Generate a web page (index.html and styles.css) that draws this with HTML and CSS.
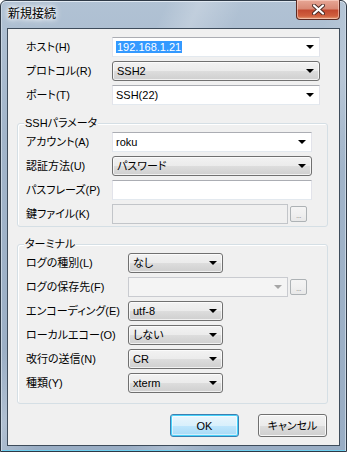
FILE: index.html
```html
<!DOCTYPE html>
<html lang="ja">
<head>
<meta charset="utf-8">
<title>新規接続</title>
<link rel="stylesheet" href="styles.css">
</head>
<body>
<div class="window">
  <div class="titlebar">
    <span class="title">新規接続</span>
    <div class="close">
      <svg width="13" height="11" viewBox="0 0 13 11">
        <path d="M2 1.5 L11 9.5 M11 1.5 L2 9.5" stroke="#4a2a24" stroke-width="4" stroke-linecap="round"/>
        <path d="M2 1.5 L11 9.5 M11 1.5 L2 9.5" stroke="#ffffff" stroke-width="2.2" stroke-linecap="round"/>
      </svg>
    </div>
  </div>
  <div class="client">
    <div class="section">
      <div class="row">
        <span class="label">ホスト(H)</span>
        <div class="combo edit w208"><span class="val"><span class="sel">192.168.1.21</span></span><span class="arrow"></span></div>
      </div>
      <div class="row">
        <span class="label">プロトコル(R)</span>
        <div class="combo list w208"><span class="val">SSH2</span><span class="arrow"></span></div>
      </div>
      <div class="row">
        <span class="label">ポート(T)</span>
        <div class="combo edit w208"><span class="val">SSH(22)</span><span class="arrow"></span></div>
      </div>
    </div>

    <div class="group g1">
      <span class="legend">SSHパラメータ</span>
      <div class="row">
        <span class="label">アカウント(A)</span>
        <div class="combo edit w200"><span class="val">roku</span><span class="arrow"></span></div>
      </div>
      <div class="row">
        <span class="label">認証方法(U)</span>
        <div class="combo list w200"><span class="val">パスワード</span><span class="arrow"></span></div>
      </div>
      <div class="row">
        <span class="label">パスフレーズ(P)</span>
        <div class="textbox w200"></div>
      </div>
      <div class="row">
        <span class="label">鍵ファイル(K)</span>
        <div class="textbox disabled w176"></div>
        <div class="browse">...</div>
      </div>
    </div>

    <div class="group g2">
      <span class="legend">ターミナル</span>
      <div class="row">
        <span class="label wide">ログの種別(L)</span>
        <div class="combo list w95"><span class="val">なし</span><span class="arrow"></span></div>
      </div>
      <div class="row">
        <span class="label wide">ログの保存先(F)</span>
        <div class="combo edit disabled w160"><span class="val"></span><span class="arrow"></span></div>
        <div class="browse">...</div>
      </div>
      <div class="row">
        <span class="label wide">エンコーディング(E)</span>
        <div class="combo list w95"><span class="val">utf-8</span><span class="arrow"></span></div>
      </div>
      <div class="row">
        <span class="label wide">ローカルエコー(O)</span>
        <div class="combo list w95"><span class="val">しない</span><span class="arrow"></span></div>
      </div>
      <div class="row">
        <span class="label wide">改行の送信(N)</span>
        <div class="combo list w95"><span class="val">CR</span><span class="arrow"></span></div>
      </div>
      <div class="row">
        <span class="label wide">種類(Y)</span>
        <div class="combo list w95"><span class="val">xterm</span><span class="arrow"></span></div>
      </div>
    </div>

    <div class="buttons">
      <div class="btn default">OK</div>
      <div class="btn">キャンセル</div>
    </div>
  </div>
</div>
</body>
</html>
```

FILE: styles.css
```css
* { box-sizing: border-box; }
html, body { margin: 0; padding: 0; background: #ffffff; }
body {
  font-family: "Liberation Sans", "Noto Sans CJK JP", sans-serif;
  font-size: 11px;
  font-feature-settings: "palt";
  color: #000;
}
.window {
  width: 347px;
  height: 452px;
  display: flex;
  flex-direction: column;
  border: 1px solid #2e3946;
  border-radius: 6px 6px 0 0;
  background:
    linear-gradient(115deg, rgba(255,255,255,0) 30%, rgba(255,255,255,0.22) 36%, rgba(255,255,255,0) 44%, rgba(255,255,255,0) 60%, rgba(255,255,255,0.18) 68%, rgba(255,255,255,0) 76%),
    linear-gradient(180deg, #b1c2d4 0%, #a2b5ca 30%, #99adc4 100%);
  box-shadow: inset 0 1px 0 #dfe8f1, inset 1px 0 0 #c9d6e3, inset -1px 0 0 #c9d6e3, inset 0 -1px 0 #6fd0f0;
}
.titlebar {
  height: 27px;
  display: flex;
  justify-content: space-between;
  align-items: flex-start;
  flex-shrink: 0;
}
.title {
  padding-left: 7px;
  line-height: 26px;
  font-size: 12px;
  font-feature-settings: normal;
  text-shadow: 0 0 4px #ffffff, 0 0 6px #ffffff, 0 0 8px rgba(255,255,255,0.8);
}
.close {
  width: 44px;
  height: 20px;
  margin-top: -1px;
  margin-right: 6px;
  border: 1px solid #5b2a22;
  border-top: none;
  border-radius: 0 0 4px 4px;
  background: linear-gradient(180deg, #e7a796 0%, #d98a76 45%, #c34a30 55%, #d0603f 85%, #e6a27a 100%);
  box-shadow: inset 0 0 0 1px rgba(255,220,210,0.55);
  display: flex;
  align-items: center;
  justify-content: center;
}
.client {
  flex: 1;
  margin: 0 6px 5px 6px;
  border: 1px solid #3e4c5b;
  background: #f0f0f0;
  padding: 6px 11px 0 9px;
  display: flex;
  flex-direction: column;
}
.section { padding-left: 8px; }
.row {
  height: 24px;
  display: flex;
  align-items: center;
}
.label {
  width: 87px;
  flex-shrink: 0;
  line-height: 14px;
  white-space: nowrap;
  padding-left: 1px;
}
.label.wide { width: 103px; }
.group {
  position: relative;
  border: 1px solid #d5dfe5;
  border-radius: 3px;
  box-shadow: inset 1px 1px 0 #ffffff;
  padding: 6px 0 0 7px;
}
.g1 { margin-top: 16px; }
.g2 { margin-top: 17px; padding-bottom: 8px; }
.legend {
  position: absolute;
  top: -8px;
  left: 6px;
  background: #f0f0f0;
  padding: 0 1px;
  line-height: 14px;
}
.combo {
  height: 20px;
  display: flex;
  align-items: center;
  padding: 0 4px 0 2px;
  flex-shrink: 0;
}
.combo .val {
  flex: 1;
  line-height: 14px;
  white-space: nowrap;
  overflow: hidden;
}
.combo .arrow {
  width: 0;
  height: 0;
  border-left: 4px solid transparent;
  border-right: 4px solid transparent;
  border-top: 4px solid #000;
  margin-right: 1px;
}
.combo.edit {
  background: #ffffff;
  border: 1px solid #e2e3ea;
  border-top-color: #abadb3;
  border-bottom-color: #e3e9ef;
}
.combo.edit .val { padding-left: 1px; }
.combo.list {
  border: 1px solid #707070;
  border-radius: 3px;
  background: linear-gradient(180deg, #f2f2f2 0%, #ebebeb 50%, #dddddd 51%, #cfcfcf 100%);
  box-shadow: inset 0 0 0 1px rgba(255,255,255,0.7);
}
.combo.list .val { padding-left: 2px; }
.combo.disabled {
  background: #f4f4f4;
  border-color: #c9cbd0;
}
.combo.disabled .arrow { border-top-color: #a6a6a6; }
.sel {
  background: #3399ff;
  color: #ffffff;
  padding: 0 1px;
}
.textbox {
  height: 20px;
  background: #ffffff;
  border: 1px solid #e2e3ea;
  border-top-color: #abadb3;
  border-bottom-color: #e3e9ef;
  flex-shrink: 0;
}
.textbox.disabled {
  background: #f0f0f0;
  border-color: #c2c5c9;
}
.browse {
  width: 17px;
  height: 16px;
  margin-left: 2px;
  border: 1px solid #adb2b5;
  border-radius: 2px;
  background: linear-gradient(180deg, #f4f4f4 0%, #f0f0f0 50%, #e8e8e8 100%);
  color: #8d8d8d;
  font-size: 8px;
  line-height: 14px;
  text-align: center;
  letter-spacing: -0.5px;
  flex-shrink: 0;
  padding-top: 2px;
}
.w208 { width: 208px; }
.w200 { width: 200px; }
.w176 { width: 176px; }
.w160 { width: 160px; }
.w95 { width: 95px; }
.buttons {
  margin-top: 10px;
  display: flex;
  justify-content: flex-end;
  gap: 19px;
  padding-right: 1px;
}
.btn {
  width: 69px;
  height: 23px;
  border: 1px solid #707070;
  border-radius: 3px;
  background: linear-gradient(180deg, #f2f2f2 0%, #ebebeb 50%, #dddddd 51%, #cfcfcf 100%);
  box-shadow: inset 0 0 0 1px rgba(255,255,255,0.8);
  display: flex;
  align-items: center;
  justify-content: center;
  line-height: 14px;
}
.btn.default {
  border-color: #3c7fb1;
  background: linear-gradient(180deg, #eaf6fd 0%, #d9f0fc 50%, #bee6fd 51%, #a7d9f5 100%);
  box-shadow: inset 0 0 0 1px #48d3fb, inset 0 0 0 2px rgba(255,255,255,0.5);
}
```
